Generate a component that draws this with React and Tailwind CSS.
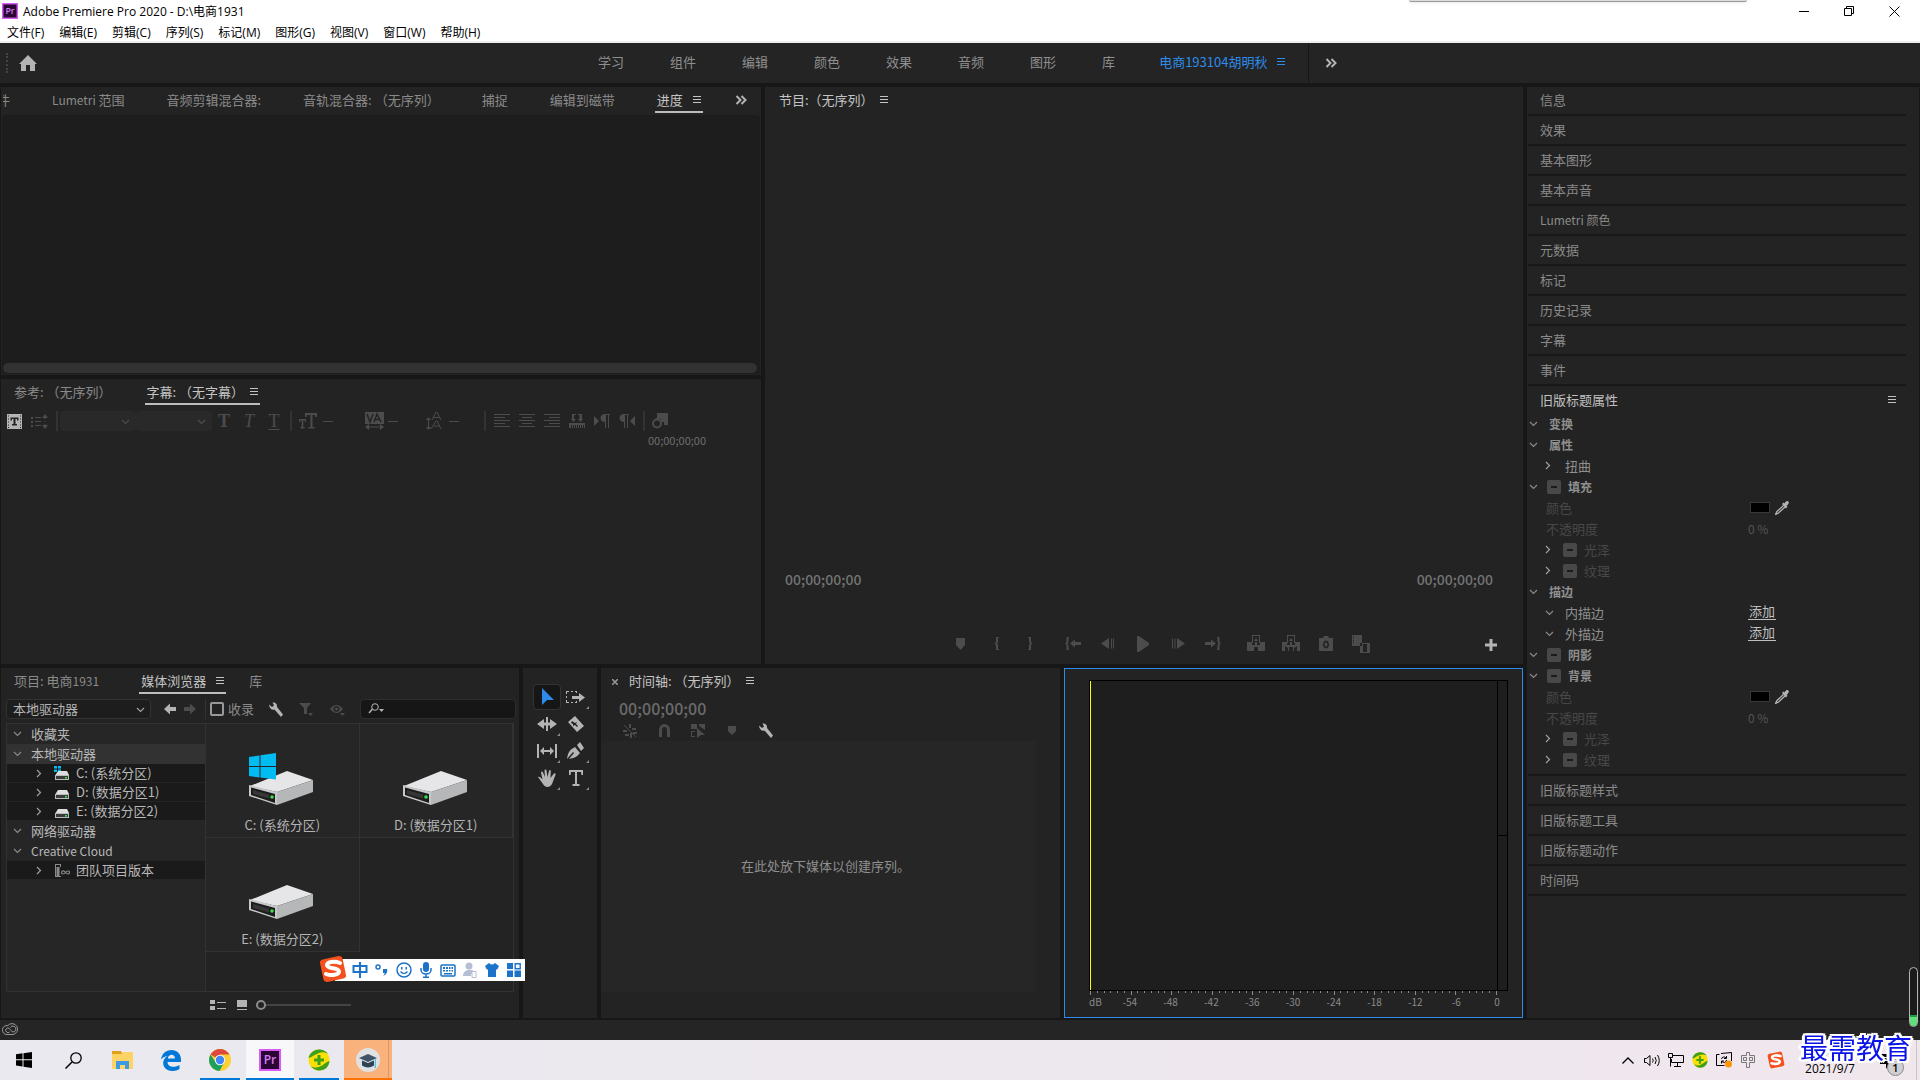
import { useState } from 'react';

const WORKSPACES = ['学习', '组件', '编辑', '颜色', '效果', '音频', '图形', '库'];
const MENUS = ['文件(F)', '编辑(E)', '剪辑(C)', '序列(S)', '标记(M)', '图形(G)', '视图(V)', '窗口(W)', '帮助(H)'];
const PANELS_TOP = ['信息', '效果', '基本图形', '基本声音', 'Lumetri 颜色', '元数据', '标记', '历史记录', '字幕', '事件'];
const PANELS_BOTTOM = ['旧版标题样式', '旧版标题工具', '旧版标题动作', '时间码'];

const PROPS = [
  { label: '变换', kind: 'head' },
  { label: '属性', kind: 'head' },
  { label: '扭曲', kind: 'sub' },
  { label: '填充', kind: 'head', check: true },
  { label: '颜色', kind: 'value', swatch: true },
  { label: '不透明度', kind: 'value', value: '0 %' },
  { label: '光泽', kind: 'sub', check: true },
  { label: '纹理', kind: 'sub', check: true },
  { label: '描边', kind: 'head' },
  { label: '内描边', kind: 'sub', open: true, add: true },
  { label: '外描边', kind: 'sub', open: true, add: true },
  { label: '阴影', kind: 'head', check: true },
  { label: '背景', kind: 'head', check: true },
  { label: '颜色', kind: 'value', swatch: true },
  { label: '不透明度', kind: 'value', value: '0 %' },
  { label: '光泽', kind: 'sub', check: true },
  { label: '纹理', kind: 'sub', check: true },
];

function Icon({ w = 16, h = 16, className = '', children }) {
  return (
    <svg width={w} height={h} viewBox={`0 0 ${w} ${h}`} fill="currentColor" className={`shrink-0 ${className}`} aria-hidden="true">
      {children}
    </svg>
  );
}

const Burger = ({ className = '' }) => (
  <Icon w={8} h={8} className={className}>
    <path d="M0 0h8v1H0zM0 3h8v1H0zM0 6h8v1H0z" />
  </Icon>
);

const More = () => (
  <Icon w={12} h={10} className="text-[#b4b4b4]">
    <path d="M1.500 1l4 4-4 4M6.500 1l4 4-4 4" fill="none" stroke="currentColor" strokeWidth="2" />
  </Icon>
);

const Down = ({ className = 'text-[#8a8a8a]' }) => (
  <Icon w={9} h={6} className={className}>
    <path d="M1 1l3.500 3.500L8 1" fill="none" stroke="currentColor" strokeWidth="1.200" />
  </Icon>
);

const Right = ({ className = 'text-[#a0a0a0]' }) => (
  <Icon w={6} h={9} className={className}>
    <path d="M1 1l3.500 3.500L1 8" fill="none" stroke="currentColor" strokeWidth="1.200" />
  </Icon>
);

const Wrench = () => (
  <Icon w={14} h={15} className="text-[#b4b4b4]">
    <path d="M0 2.500L3 5l2-1.500L3.500 0.500C6 0 8.500 1.500 8 5l6 7.500-2 2.500L5.500 7.500C3 8.500 0.300 6.500 0 2.500z" />
  </Icon>
);

const PrLogo = ({ size }) => (
  <svg width={size} height={size} viewBox="0 0 22 22" className="shrink-0" aria-hidden="true">
    <rect x="1" y="1" width="20" height="20" fill="#2a0634" stroke="#d75cf6" strokeWidth="2" />
    <text x="11" y="15" textAnchor="middle" fontSize="12" fontFamily="Open Sans" fontWeight="600" fill="#d77bf0">Pr</text>
  </svg>
);

const SogouLogo = ({ size }) => (
  <svg width={size} height={size} viewBox="0 0 28 28" className="shrink-0" aria-hidden="true">
    <rect x="2.500" y="2.500" width="23" height="23" rx="3.500" fill="#f4511e" transform="rotate(-12 14 14)" />
    <path d="M21 8c-5-2-13-1.500-13 2 0 4.500 12 2 12 6.500 0 3.500-8 4.500-13 2.500" fill="none" stroke="#fff" strokeWidth="4" strokeLinecap="round" />
  </svg>
);

const Guard360 = ({ size }) => (
  <svg width={size} height={size} viewBox="0 0 22 22" className="shrink-0" aria-hidden="true">
    <circle cx="11" cy="11" r="10.500" fill="#fde003" />
    <path d="M0.500 9C2 3 7 0 12 0.500c4 0.300 6.500 2 8 4.500-3-2-6-2-9-1C7 5.200 4.500 8 0.500 9z" fill="#3fa01c" />
    <path d="M21.500 12c-0.500 6-5 10-11 9.500-3.500-0.300-6-2-7.500-4.500 3 2 6 2 9 0.500 3.500-1.500 6-4.500 9.500-5.500z" fill="#3fa01c" />
    <path d="M9.500 6h3v3.500H16v3h-3.500V16h-3v-3.500H6v-3h3.500z" fill="#3fa01c" />
  </svg>
);

function Drive({ windows }) {
  return (
    <svg width="66" height="54" viewBox="0 0 66 54" aria-hidden="true">
      <path d="M1 33L38 18l26 9-36 12z" fill="#e6e6e8" />
      <path d="M28 39l36-12v12L28 52z" fill="#b6b7b8" />
      <path d="M0 32l28 7v13L0 43z" fill="#c8c9ca" />
      <path d="M2 34.500l24 6.500v9L2 42z" fill="#1c1c1c" />
      <path d="M4 37l16 4.500v4L4 41z" fill="#363636" />
      <circle cx="23" cy="44" r="1.800" fill="#35e24a" />
      {windows && <path d="M0 4l10.500-1.500V13H0zM11.500 2.300L27 0v13H11.500zM0 14h10.500v10.500L0 23zM11.500 14H27v12.500l-15.500-2z" fill="#00bcf2" />}
    </svg>
  );
}

function SmallDrive({ windows }) {
  return (
    <Icon w={16} h={14}>
      {windows && <path d="M0 0h3v2.500H0zM4 0h3v2.500H4zM0 3.500h3V6H0zM4 3.500h3V6H4z" fill="#00bcf2" />}
      <path d="M4 5h9l2 4H1.500z" fill="#dededf" />
      <path d="M1 9h14v5H1z" fill="#b9babb" />
      <path d="M2 10h12v3H2z" fill="#3a3a3a" />
      <path d="M11 11h2v1.500h-2z" fill="#35e24a" />
    </Icon>
  );
}

// `tight` is for titles that end in a full-width bracket, which brings its own blank
function Tab({ children, active, single, tight }) {
  return (
    <button className={`flex h-[26px] shrink-0 items-center whitespace-nowrap border-b-2 pt-0.5 ${tight ? 'gap-1.5' : 'gap-2.5'} ${active ? 'text-[#c4c4c4]' : 'text-[#8a8a8a]'} ${active && !single ? '-mx-0.5 border-[#bdbdbd] px-0.5' : 'border-transparent'}`}>
      <span className="whitespace-pre">{children}</span>
      {active && <Burger />}
    </button>
  );
}

function TitleBar() {
  return (
    <header className="relative h-[43px] shrink-0 border-b-2 border-[#eeefee] bg-white font-['Open_Sans','Noto_Sans_CJK_SC',sans-serif] text-xs text-black">
      <div className="flex h-[22px] items-center pl-0.5 pr-[3px]">
        <PrLogo size={16} />
        <h1 className="ml-[5px] pt-px">Adobe Premiere Pro 2020 - D:\电商1931</h1>
        <div className="ml-auto flex h-full">
          <button aria-label="最小化" className="grid w-[45px] place-items-center">
            <Icon w={11} h={11}><path d="M0 5h10v1H0z" /></Icon>
          </button>
          <button aria-label="还原" className="grid w-[45px] place-items-center">
            <Icon w={11} h={11}><path d="M0.500 2.500h7v7h-7zM2.500 2.500v-2h7v7h-2" fill="none" stroke="currentColor" /></Icon>
          </button>
          <button aria-label="关闭" className="grid w-[45px] place-items-center">
            <Icon w={11} h={11}><path d="M0.500 0.500l10 10M10.500 0.500l-10 10" fill="none" stroke="currentColor" /></Icon>
          </button>
        </div>
      </div>
      <nav className="flex h-[19px] items-center gap-[15px] pl-[7px] pt-0.5">
        {MENUS.map(m => <button key={m} className="whitespace-nowrap">{m}</button>)}
      </nav>
      <div className="absolute right-[173px] top-0 h-0.5 w-[338px] rounded-b-md border-b border-[#9a9a9a] bg-[#dcdcdc] shadow" />
    </header>
  );
}

function WorkspaceBar() {
  return (
    <div className="flex h-10 shrink-0 items-center bg-[#242424] text-[#8f8f8f]">
      <div className="flex w-[598px] items-center">
        <span className="ml-1.5 h-5 border-l-2 border-dotted border-[#444]" />
        <button aria-label="主页" className="ml-[11px]">
          <Icon w={18} h={16} className="text-[#b4b4b4]"><path d="M9 0l9 9h-2v7h-5v-6H7v6H2V9H0z" /></Icon>
        </button>
      </div>
      <nav className="mb-0.5 flex items-center gap-[46px]">
        {WORKSPACES.map(w => <button key={w}>{w}</button>)}
        <button className="-ml-0.5 flex items-center gap-2.5 whitespace-nowrap text-[#2d8ceb]">电商193104胡明秋<Burger /></button>
      </nav>
      <div className="ml-[23px] flex h-full items-center border-l border-[#161616] pl-4">
        <button aria-label="更多工作区"><More /></button>
      </div>
    </div>
  );
}

function ProgressPanel() {
  return (
    <section className="flex min-h-0 flex-[288_1_0] flex-col bg-[#232323]">
      <div className="flex h-7 shrink-0 gap-[42px] overflow-hidden pl-0.5">
        <div className="flex w-[7px] shrink-0 justify-end overflow-hidden"><Tab>件</Tab></div>
        <Tab><span className="text-xs">Lumetri </span>范围</Tab>
        <Tab>音频剪辑混合器:</Tab>
        <Tab>音轨混合器: （无序列）</Tab>
        <Tab>捕捉</Tab>
        <Tab>编辑到磁带</Tab>
        <Tab active>进度</Tab>
        <button aria-label="更多面板" className="-ml-2 h-[26px] w-3 shrink-0"><More /></button>
      </div>
      <div className="mx-px mb-px flex flex-1 flex-col justify-end rounded-sm bg-[#1d1d1d] p-px pr-[3px]">
        <div className="h-2.5 rounded-full bg-[#323232]" />
      </div>
    </section>
  );
}

const Divider = () => <span className="h-5 w-0.5 shrink-0 bg-[#333]" />;
const Dash = () => <span className="h-px w-2.5 shrink-0 bg-[#4c4c4c]" />;

const FontSelect = ({ label }) => (
  <div className="relative w-[76px] shrink-0">
    <select aria-label={label} className="h-5 w-full appearance-none rounded-sm bg-[#292929]"><option></option></select>
    <Down className="pointer-events-none absolute right-1.5 top-2 text-[#4c4c4c]" />
  </div>
);

const Align = ({ d, label }) => (
  <button aria-label={label}><Icon w={16} h={14}><path d={d} /></Icon></button>
);

function CaptionPanel() {
  return (
    <section className="flex min-h-0 flex-[285_1_0] flex-col bg-[#232323]">
      <div className="flex h-7 shrink-0 gap-[35px] pl-[13px]">
        <Tab>参考: （无序列）</Tab>
        <Tab active tight>字幕: （无字幕）</Tab>
      </div>
      <div className="mt-1 flex h-5 shrink-0 items-center pl-1.5 text-[#4c4c4c]">
        <button aria-label="添加字幕" className="text-[#b4b4b4]">
          <Icon w={15} h={15}>
            <path d="M0 0h15v15H0z" />
            <path d="M1 1.500h1v1H1zM1 4.500h1v1H1zM1 7.500h1v1H1zM1 10.500h1v1H1zM1 13h1v1H1zM13 1.500h1v1h-1zM13 4.500h1v1h-1zM13 7.500h1v1h-1zM13 10.500h1v1h-1zM13 13h1v1h-1zM3.500 3.500h8v3h-1.500V5H8.500v5H10v1.500H5V10h1.500V5H5v1.500H3.500z" fill="#232323" />
          </Icon>
        </button>
        <button aria-label="行距" className="ml-[9px] mr-2">
          <Icon w={17} h={15}><path d="M0 3h2v2H0zM4 3h6v1H4zM0 7h2v2H0zM4 7h6v1H4zM0 11h2v2H0zM4 11h6v1H4zM14 0l3 4h-2.500v1h-1V4H11zM13.500 7h1v1h-1zM13.500 10h1v1H17l-3 4-3-4h2.500z" /></Icon>
        </button>
        <Divider />
        <div className="ml-0.5 flex"><FontSelect label="字体" /><FontSelect label="字体样式" /></div>
        <div className="ml-1.5 mr-2.5 flex items-center gap-[13px] font-['Liberation_Serif',serif] text-lg leading-5">
          <button className="w-3 font-bold">T</button>
          <button className="w-3 italic">T</button>
          <button className="w-3 underline underline-offset-2">T</button>
        </div>
        <Divider />
        <div className="ml-[7px] flex w-[66px] items-center gap-1.5">
          <Icon w={18} h={16}><path d="M6 0h12v4h-1.500L16 2h-2.500v12h2v1.500h-6V14h2V2H8l-.5 2H6zM0 6h7v3H6V7.500H4.300v6.500H5.500v1.500h-4V14h1.200V7.500H1V9H0z" /></Icon>
          <Dash />
        </div>
        <div className="flex w-[61px] items-center gap-1">
          <Icon w={19} h={18}>
            <path d="M0 0h19v12H0z" />
            <path d="M2 2l3 8 3-8M9 10l3-8 4 8M10.500 7.500h4" fill="none" stroke="#232323" strokeWidth="1.500" />
            <path d="M0 15l4-3v2.500h11V12l4 3-4 3v-2.500H4V18z" />
          </Icon>
          <Dash />
        </div>
        <div className="flex w-[58px] items-center gap-1.5">
          <Icon w={17} h={18}><path d="M6 8l4-8h1l4 8M8 5.500h5M5 17l5-8h1l4 8M8 14h6M2.500 7v9" fill="none" stroke="currentColor" /><path d="M2.500 5L5 8H0zM2.500 18L0 15h5z" /></Icon>
          <Dash />
        </div>
        <Divider />
        <div className="ml-2 mr-2 flex items-center gap-[9px]">
          <Align label="左对齐" d="M0 0h16v1H0zM0 3h11v1H0zM0 6h16v1H0zM0 9h11v1H0zM0 12h16v1H0z" />
          <Align label="居中" d="M0 0h16v1H0zM3 3h10v1H3zM0 6h16v1H0zM3 9h10v1H3zM0 12h16v1H0z" />
          <Align label="右对齐" d="M0 0h16v1H0zM5 3h11v1H5zM0 6h16v1H0zM5 9h11v1H5zM0 12h16v1H0z" />
          <Align label="制表位" d="M3 0h4v1H5v4h2L4.500 8 2 5h1zM9 0h4v5h1L11.500 8 9 5h1.500V1H9zM0 9h16v5h-1v-3h-1v3h-1v-3h-1v3h-1v-3h-1v3H9v-3H8v3H7v-3H6v3H5v-3H4v3H3v-3H2v3H0z" />
          <Align label="从左到右" d="M0 2l5 5-5 5zM16 0v1h-1v13h-1V1h-2v13h-1V8C5 8 5 0 11 0z" />
          <Align label="从右到左" d="M16 2l-5 5 5 5zM10 0v1H9v13H8V1H6v13H5V8C-1 8-1 0 5 0z" />
        </div>
        <Divider />
        <button aria-label="导出设置" className="ml-1.5">
          <Icon w={17} h={16}><path d="M6 0h11v12h-4V9h-3V6H6z" /><circle cx="6" cy="10.500" r="4" fill="none" stroke="currentColor" strokeWidth="2" /><path d="M10 3l-6 3 5 1z" /></Icon>
        </button>
      </div>
      <time className="ml-[647px] mt-px text-[11px] leading-4 text-[#6e6e6e]">00;00;00;00</time>
    </section>
  );
}

const TRANSPORT = [
  { label: '添加标记', d: 'M5 3h9v7l-4.500 5L5 10z' },
  { label: '标记入点', d: 'M13 2v1h-1v4l-1 1.500 1 1.500v4h1v1h-3v-5L8.500 8.500 10 7V2z' },
  { label: '标记出点', d: 'M7 2v1h1v4l1 1.500L8 10v4H7v1h3v-5l1.500-1.500L10 7V2z' },
  { label: '转到入点', gap: true, d: 'M5 2v1H4.500v4l-1 1.500 1 1.500v4H5v1H2.500v-5L1 8.500 2.500 7V2zM6 8.500l5-4V7h6v3h-6v2.500z' },
  { label: '后退一帧', d: 'M2 8.500L10 3v11zM12 3.500h1v10h-1zM14 3.500h1v10h-1z' },
  { label: '播放', d: 'M3 1h2l10 7v2L5 17H3z' },
  { label: '前进一帧', d: 'M3 3.500h1v10H3zM5.500 3.500h1v10h-1zM8 3l8 5.500L8 14z' },
  { label: '转到出点', d: 'M13 2v1h.5v4l1 1.500-1 1.500v4H13v1h2.500v-5L17 8.500 15.500 7V2zM12 8.500l-5-4V7H1v3h6v2.500z' },
  { label: '提升', gap: true, d: 'M0 7h5v3h3V7h2v3h3V7h5v9h-7v-4H7v4H0zM5 0h8v8h-1V1H6v7H5zM9 3l2 3H7z' },
  { label: '提取', d: 'M0 7h5v3h3V7h2v3h3V7h5v9h-3v-5l-3 2v3h-1v-4H7v4H6v-3l-3-2v5H0zM5 0h8v8h-1V1H6v7H5zM9 3l2 3H7z' },
  { label: '导出帧', d: 'M2 3h4l1-2h4l1 2h4v13H2zM9 5.500a3 4 0 1 0 .01 0zM9 7.500a1.500 2 0 1 1-.01 0z' },
  { label: '比较视图', d: 'M0 0h10v11H0zM8 8h10v10H8zM11 9v8h4V9zM1 1v1h1V1zM1 3v1h1V3zM1 5v1h1V5zM1 7v1h1V7z' },
];

function ProgramPanel() {
  return (
    <section className="flex min-h-0 flex-col bg-[#232323]">
      <div className="h-7 pl-3.5"><Tab active single tight>节目:（无序列）</Tab></div>
      <div className="flex-1" />
      <div className="flex justify-between px-5 pr-[30px] text-sm font-medium leading-5 text-[#747474]">
        <time>00;00;00;00</time>
        <time>00;00;00;00</time>
      </div>
      <div className="mb-2 mt-[43px] flex h-6 items-center text-[#4c4c4c]">
        <div className="ml-[177px] flex">
          {TRANSPORT.map(t => (
            <button key={t.label} aria-label={t.label} className={`grid w-[35px] place-items-center ${t.gap ? 'ml-2' : ''}`}>
              <Icon w={18} h={18}><path fillRule="evenodd" d={t.d} /></Icon>
            </button>
          ))}
        </div>
        <button aria-label="按钮编辑器" className="ml-auto mr-[26px] mt-0.5 text-[#b4b4b4]">
          <Icon w={12} h={12}><path d="M4.500 0h3v4.500H12v3H7.500V12h-3V7.500H0v-3h4.500z" /></Icon>
        </button>
      </div>
    </section>
  );
}

function TreeRow({ label, open, nested, selected, icon }) {
  return (
    <li className={`flex items-center ${nested ? 'mb-px h-[18px] bg-[#1a1a1a] pl-[27px]' : 'h-5 pl-[5px]'} ${selected ? 'bg-[#323232]' : ''}`}>
      <span className="grid w-2.5 place-items-center">{open ? <Down /> : <Right />}</span>
      {icon && <span className="ml-2 grid w-5 place-items-center">{icon}</span>}
      <span className={icon ? 'ml-1' : 'ml-[9px]'}>{label}</span>
    </li>
  );
}

function DriveCell({ label, windows }) {
  return (
    <figure className="flex h-[114px] flex-col items-center border-b border-r border-[#323232] bg-[#262626] pt-[29px]">
      <Drive windows={windows} />
      <figcaption className="mt-2 leading-5">{label}</figcaption>
    </figure>
  );
}

function MediaBrowser() {
  const [zoom, setZoom] = useState(0);
  return (
    <section className="flex min-h-0 flex-col bg-[#232323] text-[#b4b4b4]">
      <div className="flex h-7 shrink-0 pl-[13px]">
        <Tab>项目: 电商<span className="text-xs">1931</span></Tab>
        <div className="ml-[42px] mr-[25px] flex"><Tab active>媒体浏览器</Tab></div>
        <Tab>库</Tab>
      </div>
      <div className="mt-[3px] flex h-5 shrink-0 items-center pl-[5px] pr-[3px]">
        <div className="relative w-[145px] shrink-0">
          <select aria-label="驱动器" className="h-5 w-full appearance-none rounded-sm border border-[#333] bg-[#1d1d1d] pl-1.5 leading-4">
            <option>本地驱动器</option>
          </select>
          <Down className="pointer-events-none absolute right-1.5 top-2 text-[#a0a0a0]" />
        </div>
        <button aria-label="后退" className="ml-[13px]"><Icon w={12} h={12}><path d="M0 6l6-5.500v3.500h6v4H6v3.500z" /></Icon></button>
        <button aria-label="前进" className="ml-2 mr-[9px] text-[#4c4c4c]"><Icon w={12} h={12}><path d="M12 6L6 .5V4H0v4h6v3.500z" /></Icon></button>
        <label className="flex h-5 items-center gap-1 border-l border-[#333] pl-1 text-[#8a8a8a]">
          <input type="checkbox" className="size-3.5 appearance-none rounded-xs border-2 border-[#999]" />收录
        </label>
        <button aria-label="设置" className="ml-[15px]"><Wrench /></button>
        <button aria-label="筛选" className="ml-4 text-[#4c4c4c]"><Icon w={14} h={14}><path d="M0 1h12L8 6v6H5V6zM9 11h5l-2.500 3z" /></Icon></button>
        <button aria-label="查看方式" className="ml-[17px] mr-3.5 text-[#4c4c4c]">
          <Icon w={16} h={14}><path fillRule="evenodd" d="M0 7q6.500-8 13 0-6.500 8-13 0zM6.500 4a3 3 0 1 0 .01 0z" /><circle cx="6.500" cy="7" r="1.500" /><path d="M10 11h5l-2.500 3z" /></Icon>
        </button>
        <div className="relative min-w-0 flex-1">
          <Icon w={16} h={12} className="absolute left-2 top-1"><circle cx="7" cy="4" r="3.300" fill="none" stroke="currentColor" /><path d="M4.500 6L1 10" stroke="currentColor" strokeWidth="1.500" /><path d="M11 6h5l-2.500 3z" /></Icon>
          <input type="search" aria-label="搜索" className="block h-5 w-full rounded-sm border border-[#2d2d2d] bg-[#161616] pl-7" />
        </div>
      </div>
      <div className="ml-[5px] mr-[5px] mt-1 flex min-h-0 flex-1 border border-[#323232]">
        <ul className="w-[198px] shrink-0 bg-[#262626] text-[#b8b8b8]">
          <TreeRow open label="收藏夹" />
          <TreeRow open selected label="本地驱动器" />
          <TreeRow nested label="C: (系统分区)" icon={<SmallDrive windows />} />
          <TreeRow nested label="D: (数据分区1)" icon={<SmallDrive />} />
          <TreeRow nested label="E: (数据分区2)" icon={<SmallDrive />} />
          <TreeRow open label="网络驱动器" />
          <TreeRow open label={<span className="text-xs">Creative Cloud</span>} />
          <TreeRow nested label="团队项目版本" icon={
            <Icon w={16} h={13} className="text-[#8a8a8a]"><path d="M1 0h6v3H6V1H2v11h5v1H1zM2.500 3h3v9h-3z" /><path d="M11.500 8.500c-1.500-2.500-4-2-4 0s2.500 2 4 0 4-2 4 0-2.500 2-4 0z" fill="none" stroke="currentColor" strokeWidth="1.200" /></Icon>
          } />
        </ul>
        <div className="grid flex-1 grid-cols-2 content-start border-l border-[#323232]">
          <DriveCell windows label="C: (系统分区)" />
          <DriveCell label="D: (数据分区1)" />
          <DriveCell label="E: (数据分区2)" />
        </div>
      </div>
      <div className="flex h-[26px] shrink-0 items-center pb-px pl-[209px]">
        <button aria-label="列表视图"><Icon w={16} h={10}><path d="M0 0h5v4H0zM0 6h5v4H0zM7 2h9v1H7zM7 8h9v1H7z" /></Icon></button>
        <button aria-label="缩览图视图" className="ml-[11px]"><Icon w={10} h={10}><path d="M0 0h10v7H0zM0 9h10v1H0z" /></Icon></button>
        <input type="range" aria-label="缩览图大小" value={zoom} onChange={e => setZoom(e.target.value)}
          className="ml-[9px] h-2.5 w-[95px] appearance-none bg-transparent [&::-webkit-slider-runnable-track]:h-0.5 [&::-webkit-slider-runnable-track]:bg-[#444] [&::-webkit-slider-thumb]:-mt-1 [&::-webkit-slider-thumb]:size-2.5 [&::-webkit-slider-thumb]:appearance-none [&::-webkit-slider-thumb]:rounded-full [&::-webkit-slider-thumb]:border-2 [&::-webkit-slider-thumb]:border-[#8a8a8a] [&::-webkit-slider-thumb]:bg-[#232323]" />
      </div>
    </section>
  );
}

const TOOLS = [
  { label: '选择工具', d: 'M5 1l12 12h-7l-5 5z' },
  { label: '向前选择轨道工具', corner: true, d: 'M0 4h3v1H1v2H0zM5 4h2v1H5zM9 4h2v2h-1V5H9zM0 9h1v2H0zM0 13h1v2h2v1H0zM5 15h2v1H5zM9 15h1v-1h1v2H9zM6 9h7V6l6 4.500-6 4.500v-3H6z' },
  { label: '波纹编辑工具', corner: true, d: 'M0 10l7-5v3.500h2V3h2v5.500h2V5l7 5-7 5v-3.500h-2V17H9v-5.500H7V15z' },
  { label: '剃刀工具', d: 'M2 8l7-6 9 10-7 6zM6 7l-1 2 2 1v2l2-1 2 2 1-1-2-2 1-2-2 1z' },
  { label: '外滑工具', corner: true, d: 'M0 3h2v14H0zM18 3h2v14h-2zM3 10l4-4v3h6V6l4 4-4 4v-3H7v3z' },
  { label: '钢笔工具', corner: true, d: 'M1 18C2 12 3 9 9 6l5 6c-3 4-6 5-11 6l5-6-1-1zM11 4l3-3 4 6-3 3z' },
  { label: '手形工具', corner: true, d: 'M1 9c1.500-1 3 1 4.500 2.500L4 4.500c0-1.500 1.500-1.500 2 0L8 9 7.500 2.500c0-1.500 2-1.500 2 0L10.500 9 12 3c.5-1.500 2-1 1.800.5L13.500 10l3-4c1-1.500 2.500-.5 2 .8L15 16c-2 4-7 4-9 0z' },
  { label: '文字工具', corner: true, d: 'M3 2h14v5h-1.500L15 4h-4v12h2.500v2h-7v-2H9V4H5l-.5 3H3z' },
];

function ToolsPanel() {
  return (
    <section aria-label="工具" className="bg-[#232323] pl-[9px] pr-1.5 pt-4 text-[#b4b4b4]">
      <div className="grid grid-cols-2 justify-items-center gap-y-px">
        {TOOLS.map((t, i) => (
          <button key={t.label} aria-label={t.label} className={`relative grid h-[26px] w-7 place-items-center rounded-sm border ${i === 0 ? 'border-[#333] bg-[#161616] text-[#2d8ceb]' : 'border-transparent'}`}>
            <Icon w={20} h={20}><path fillRule="evenodd" d={t.d} /></Icon>
            {t.corner && <Icon w={3} h={3} className="absolute bottom-0 right-0 text-[#8a8a8a]"><path d="M3 0v3H0z" /></Icon>}
          </button>
        ))}
      </div>
    </section>
  );
}

function TimelinePanel() {
  return (
    <section className="flex min-h-0 flex-col bg-[#232323]">
      <div className="flex h-[26px] shrink-0 items-center pl-[11px]">
        <button aria-label="关闭时间轴" className="mr-[11px] mt-0.5"><Icon w={6} h={6} className="text-[#999]"><path d="M0 0l6 6M6 0L0 6" stroke="currentColor" strokeWidth="1.500" /></Icon></button>
        <Tab active single tight>时间轴: （无序列）</Tab>
      </div>
      <time className="mt-0.5 pl-[18px] text-base font-medium leading-6 text-[#6c6c6c]">00;00;00;00</time>
      <div className="flex h-[21px] shrink-0 items-center pl-[22px] text-[#4c4c4c]">
        <button aria-label="嵌套序列" className="w-[35px]"><Icon w={14} h={14}><path d="M1 1l12 12" stroke="currentColor" /><path d="M6 0h2v4H6zM9 4h4v2H9zM0 6h4v2H0zM10 8h4v2h-4zM2 10h4v2H2zM7 9h2v5H7z" /></Icon></button>
        <button aria-label="对齐" className="w-[33px]"><Icon w={13} h={13}><path d="M2.500 13V6a4 4.500 0 0 1 8 0v7" fill="none" stroke="currentColor" strokeWidth="3" /></Icon></button>
        <button aria-label="链接选择项" className="w-[37px]"><Icon w={14} h={14}><path d="M0 0h6v5H0zM8 0h6v6L8 2zM0 7h4v1H1v4h3v1H0zM6 4l8 7h-4l-4 3z" /></Icon></button>
        <button aria-label="添加标记" className="w-[31px]"><Icon w={8} h={9}><path d="M0 0h8v5L4 9 0 5z" /></Icon></button>
        <button aria-label="时间轴显示设置"><Wrench /></button>
      </div>
      <div className="mb-[26px] mr-6 flex flex-1 items-center justify-center bg-[#262626] pb-0.5 pl-3.5 text-[#8f8f8f]">
        在此处放下媒体以创建序列。
      </div>
    </section>
  );
}

function AudioMeter() {
  const labels = ['dB', '-54', '-48', '-42', '-36', '-30', '-24', '-18', '-12', '-6', '0'];
  return (
    <section aria-label="音频仪表" className="flex min-h-0 flex-col border border-[#2d8ceb] bg-[#232323] pb-2 pl-6 pr-3.5 pt-[11px]">
      <div className="flex min-h-0 flex-1 border border-black bg-[#1e1e1e]">
        <div className="flex-1 border-l border-[#ffff00]" />
        <div className="flex w-2.5 flex-col border-l border-black">
          <div className="flex-1 border-b border-black" />
          <div className="flex-1" />
        </div>
      </div>
      <div className="ml-px mr-[11px] flex justify-between text-[#8a8a8a]">
        {Array.from({ length: 61 }, (_, i) => (
          <span key={i} className={`w-px bg-current ${i % 6 === 0 ? 'h-1' : 'h-0.5'}`} />
        ))}
      </div>
      <div className="mr-[11px] flex justify-between text-[10px] leading-3.5 text-[#8a8a8a]">
        {labels.map((l, i) => (
          <span key={l} className={`flex w-0 whitespace-nowrap ${i === 0 ? '' : 'justify-center'}`}>{l}</span>
        ))}
      </div>
    </section>
  );
}

const MinusBox = ({ label }) => (
  <input type="checkbox" aria-label={label}
    className="grid size-3.5 shrink-0 appearance-none place-items-center rounded-xs bg-[#484848] before:h-0.5 before:w-1.5 before:bg-[#1b1b1b]" />
);

function PropRow({ row }) {
  const { label, kind, check, open, swatch, value, add } = row;
  const indent = kind === 'head' ? 'pl-px' : kind === 'sub' ? 'pl-[17px]' : 'pl-[18px]';
  const tone = kind === 'value' || (kind === 'sub' && check) ? 'text-[#484848]' : 'text-[#8f8f8f]';
  return (
    <li className="flex h-[21px] items-center">
      <div className={`flex w-[220px] shrink-0 items-center ${indent}`}>
        {kind !== 'value' && (
          <span className="flex w-[18px] items-center">{kind === 'head' || open ? <Down /> : <Right />}</span>
        )}
        {check && <MinusBox label={label} />}
        <span className={`${tone} ${kind === 'head' ? 'text-xs font-bold' : ''} ${check ? 'ml-[7px]' : kind === 'value' ? '' : 'ml-0.5'}`}>{label}</span>
      </div>
      {swatch && (
        <>
          <button aria-label="颜色" className="ml-0.5 h-[11px] w-5 border border-[#383838] bg-black" />
          <button aria-label="吸管" className="ml-[5px] text-[#b4b4b4]">
            <Icon w={14} h={14}><path d="M7 3l1.500-1.500 1 1c1-2 2-2.500 3.200-2.500 1.800.8 1.500 2.800-1.200 4.800l1 1L11 7.500z" /><path d="M8.500 4.500L2 10.500l-1.500 3 3-1.500L10 6" fill="none" stroke="currentColor" strokeWidth="1.300" /></Icon>
          </button>
        </>
      )}
      {value && <span className="text-xs text-[#555]">{value}</span>}
      {add && <button className="mb-1 border-b border-[#c0c0c0] px-px leading-[17px] text-[#c0c0c0]">添加</button>}
    </li>
  );
}

const PanelHeader = ({ children }) => (
  <button className={`flex h-[30px] items-center border-b-2 border-[#181818] pl-3 text-left text-[#8a8a8a] ${children.startsWith('Lumetri') ? 'text-xs' : ''}`}>{children}</button>
);

function RightDock() {
  return (
    <aside className="flex w-[392px] shrink-0 flex-col bg-[#232323] pl-px pr-[13px]">
      <div className="-mt-px flex flex-col">{PANELS_TOP.map(p => <PanelHeader key={p}>{p}</PanelHeader>)}</div>
      <div className="flex h-[27px] shrink-0 items-center justify-between pl-3 pr-2.5 text-[#c0c0c0]">
        <h2>旧版标题属性</h2>
        <button aria-label="面板菜单"><Burger /></button>
      </div>
      <ul className="pb-1">{PROPS.map((row, i) => <PropRow key={i} row={row} />)}</ul>
      <div className="flex flex-col border-t-2 border-[#181818]">{PANELS_BOTTOM.map(p => <PanelHeader key={p}>{p}</PanelHeader>)}</div>
    </aside>
  );
}

const ImeButton = ({ label, children }) => (
  <button aria-label={label} className="grid w-[22px] place-items-center">{children}</button>
);

function ImeBar() {
  return (
    <div className="fixed bottom-[99px] left-[319px] flex items-center">
      <div className="absolute -top-1 left-0 z-10"><SogouLogo size={28} /></div>
      <div className="ml-4 flex h-[22px] w-[190px] items-center bg-white pl-3.5 text-[#1c74c8]">
        <ImeButton label="中文">
          <Icon w={16} h={16}><path d="M1.500 4h13v6h-13zM8 0v16" fill="none" stroke="currentColor" strokeWidth="2" /></Icon>
        </ImeButton>
        <ImeButton label="标点"><Icon w={14} h={12}><circle cx="3" cy="3" r="2" fill="none" stroke="currentColor" strokeWidth="1.500" /><path d="M8 5h4c1 3-1 6-4 7 1-1 2-2 1.500-3H8z" /></Icon></ImeButton>
        <ImeButton label="表情"><Icon w={16} h={16}><circle cx="8" cy="8" r="7" fill="none" stroke="currentColor" strokeWidth="1.500" /><path d="M5 5h1.500v2.500H5zM9.500 5H11v2.500H9.500z" /><path d="M4.500 9.500q3.500 4 7 0" fill="none" stroke="currentColor" strokeWidth="1.200" /></Icon></ImeButton>
        <ImeButton label="语音"><Icon w={12} h={16}><rect x="3" width="6" height="10" rx="3" /><path d="M1 6v2a5 4 0 0 0 10 0V6M6 12v3M3 15.200h6" fill="none" stroke="currentColor" strokeWidth="1.500" /></Icon></ImeButton>
        <ImeButton label="键盘"><Icon w={16} h={13}><rect x="1" y="1" width="14" height="11" rx="1" fill="none" stroke="currentColor" strokeWidth="1.500" /><path d="M3 3h2v2H3zM6 3h2v2H6zM9 3h1.500v2H9zM11.500 3H13v2h-1.500zM3 6h2v1.500H3zM6 6h2v1.500H6zM9 6h1.500v1.500H9zM11.500 6H13v1.500h-1.500zM4 9h8v1.500H4z" /></Icon></ImeButton>
        <ImeButton label="用户"><Icon w={14} h={16} className="text-[#b4bfd4]"><circle cx="6" cy="4" r="3.500" /><path d="M0 14c0-8 12-8 12-2H8v2z" /><path d="M9 9.500h4v6H9z" fill="#fff" stroke="currentColor" /></Icon></ImeButton>
        <ImeButton label="皮肤"><Icon w={14} h={14}><path d="M4 0q3 3 6 0l4 3-2 4-1-1v8H3V6L2 7 0 3z" /></Icon></ImeButton>
        <ImeButton label="工具箱"><Icon w={14} h={14}><path d="M0 0h6v6H0zM0 7.500h6V14H0zM7.500 7.500H14V14H7.500z" /><path d="M8.200.7h5v5h-5z" fill="none" stroke="currentColor" strokeWidth="1.400" /></Icon></ImeButton>
      </div>
    </div>
  );
}

function TaskButton({ label, className = '', line, children }) {
  return (
    <button aria-label={label} className={`relative grid h-10 w-12 place-items-center ${className}`}>
      {children}
      {line && <span className={`absolute bottom-0 h-0.5 ${line}`} />}
    </button>
  );
}

function Taskbar() {
  return (
    <footer className="flex h-10 shrink-0 bg-linear-to-r from-[#e9e9ef] to-[#f0e7ed] font-['Open_Sans','Noto_Sans_CJK_SC',sans-serif] text-xs text-black">
      <nav className="flex gap-px">
        <TaskButton label="开始"><Icon w={16} h={16}><path d="M0 2.300l6.500-1v6H0zM7.500 1.200L16 0v7.300H7.500zM0 8.300h6.500v6.200L0 13.600zM7.500 8.300H16V16l-8.500-1.200z" /></Icon></TaskButton>
        <TaskButton label="搜索"><Icon w={17} h={17}><circle cx="11" cy="6" r="5.200" fill="none" stroke="currentColor" strokeWidth="1.300" /><path d="M7 10L.5 16.500" stroke="currentColor" strokeWidth="1.500" /></Icon></TaskButton>
        <TaskButton label="文件资源管理器">
          <Icon w={21} h={18}><path d="M0 0h9l1 2h10v4H0z" fill="#e0a11b" /><path d="M0 3h10l1-2h10v17H0z" fill="#fcd364" /><path d="M4 18v-8h13v8h-4v-4H8v4z" fill="#3c9be0" /></Icon>
        </TaskButton>
        <TaskButton label="Edge">
          <Icon w={20} h={21}><path d="M0 9.500C1 3.500 5 0 10.500 0 16 0 20 4 20 9.500V12H6.500c.3 5.500 7.500 6 12 3v4c-4.500 3-11 2.500-14-.5C.5 14.500 2 8.500 6.500 6 3.500 6.500 1.500 7.500 0 9.500zM6.800 8.500H14c0-5-6.500-5-7.200 0z" fill="#0078d7" fillRule="evenodd" /></Icon>
        </TaskButton>
        <TaskButton label="Chrome" line="w-10 bg-[#0078d7]">
          <Icon w={22} h={22}>
            <circle cx="11" cy="11" r="11" fill="#fdd031" />
            <path d="M11 11L1.500 5.500A11 11 0 0 1 20.500 5.500H11z" fill="#de4b3d" />
            <path d="M1.500 5.500A11 11 0 0 0 10.500 22l5-9L11 11l-4.500 2z" fill="#1ea05c" />
            <circle cx="11" cy="11" r="5.200" fill="#f4f4f4" /><circle cx="11" cy="11" r="4.200" fill="#4285f4" />
          </Icon>
        </TaskButton>
        <TaskButton label="Premiere Pro" className="ml-px bg-[#f8f8fa]" line="w-12 bg-[#0078d7]"><PrLogo size={22} /></TaskButton>
        <TaskButton label="360" line="w-10 bg-[#0078d7]"><Guard360 size={22} /></TaskButton>
        <TaskButton label="课堂" className="bg-[#fab27c]" line="left-0 w-12 bg-[#ff7200]">
          <Icon w={24} h={24}><circle cx="12" cy="12" r="12" fill="#dfe1e3" /><path d="M12 6l9 4-9 4-9-4z" fill="#3f5468" /><path d="M6 12.500v5q6 4 12 0v-5L12 15z" fill="#2f4356" /><path d="M19 11h1v9h-1.500z" fill="#4fc3e8" /></Icon>
          <span className="absolute right-[3px] top-0 h-[38px] w-px bg-[#d99766]" />
        </TaskButton>
      </nav>
      <div className="ml-auto flex items-center *:shrink-0">
        <button aria-label="显示隐藏的图标" className="grid w-6 place-items-center"><Icon w={12} h={7}><path d="M.5 6.500L6 1l5.500 5.500" fill="none" stroke="currentColor" strokeWidth="1.300" /></Icon></button>
        <button aria-label="音量" className="grid w-6 place-items-center"><Icon w={17} h={13}><path d="M.5 4.500h2l3.500-3v10l-3.500-3h-2zM8.500 4.500q1.500 2 0 4M11 3q2.500 3.500 0 7M13.500 1q3.500 5.500 0 11" fill="none" stroke="currentColor" /></Icon></button>
        <button aria-label="网络" className="grid w-6 place-items-center"><Icon w={16} h={14}><path d="M5 2.500h10.500v7H3.500V6M.5.500h4v4h-4zM2.500 4.500v9M9.500 9.500v4M6 13.500h7" fill="none" stroke="currentColor" /></Icon></button>
        <button aria-label="360" className="grid w-6 place-items-center"><Guard360 size={16} /></button>
        <button aria-label="更新" className="grid w-6 place-items-center"><Icon w={17} h={16}><path d="M3.500 2.500h-3v11h8M5 1.500L15.500.5V9" fill="none" stroke="currentColor" /><path d="M5.500 7a2.500 2.500 0 0 1 4.500-1M10.500 8a2.500 2.500 0 0 1-4.500 1.500M10.500 4v2.500H8M5.500 11.500V9H8" fill="none" stroke="currentColor" /><circle cx="12.500" cy="12" r="3.500" fill="#ff9500" /></Icon></button>
        <button aria-label="输入法" className="grid w-6 place-items-center">
          <Icon w={14} h={16}><path d="M5.500 3.500v-3h3v3h5v7h-5v5h-3v-5h-5v-7zM2.500 5.500h3v3h-3zM8.500 5.500h3v3h-3z" fill="none" stroke="#777" /></Icon>
        </button>
        <button aria-label="搜狗" className="grid w-8 place-items-center"><SogouLogo size={18} /></button>
        <div className="w-[76px] text-center leading-4">
          <span className="block pr-2 pt-1">7</span>
          <time className="block pb-0.5">2021/9/7</time>
        </div>
        <button aria-label="通知" className="relative grid h-10 w-12 justify-start pl-3 pt-3.5">
          <Icon w={14} h={15}><path d="M0 0h14v10H9l-3 5v-5H0z" /><path d="M2 3h10v1H2zM2 6h10v1H2z" fill="#eee" /></Icon>
          <span className="absolute bottom-1 right-3 grid size-[17px] place-items-center rounded-full border border-[#888] bg-[#d0cfd2] text-[11px] font-semibold leading-3">1</span>
        </button>
        <span className="h-full w-1 border-l border-[#c8c4c8]" />
      </div>
    </footer>
  );
}

export default function App() {
  return (
    <div className="flex h-screen flex-col overflow-hidden bg-[#171717] font-['Noto_Sans_CJK_SC',sans-serif] text-[13px] leading-5">
      <TitleBar />
      <WorkspaceBar />
      <main className="flex min-h-0 flex-1 gap-1 px-px pb-0.5 pt-1">
        <div className="grid min-w-0 flex-1 grid-rows-[minmax(0,577fr)_minmax(0,350fr)] gap-1">
          <div className="grid min-h-0 grid-cols-[minmax(0,760fr)_minmax(0,758fr)] gap-1">
            <div className="flex min-h-0 flex-col gap-1">
              <ProgressPanel />
              <CaptionPanel />
            </div>
            <ProgramPanel />
          </div>
          <div className="grid min-h-0 grid-cols-[518px_74px_minmax(0,1fr)_minmax(0,1fr)] gap-1">
            <MediaBrowser />
            <ToolsPanel />
            <TimelinePanel />
            <AudioMeter />
          </div>
        </div>
        <RightDock />
      </main>
      <div className="flex h-5 shrink-0 items-center bg-[#252525] pb-0.5 pl-0.5 text-[#9a9a9a]">
        <Icon w={17} h={12}>
          <g fill="none" stroke="currentColor">
            <path d="M5 11.500a4.500 4.500 0 1 1 .8-8.900A5.500 5.500 0 1 1 11 11.500z" />
            <path d="M7.500 9A2.300 2.300 0 1 1 7 5.200L10.500 9a3 3 0 1 0-2.200-4.500" />
          </g>
        </Icon>
      </div>
      <Taskbar />
      <ImeBar />
      <div className="fixed bottom-[53px] right-0.5 flex h-[60px] w-[9px] flex-col justify-end overflow-hidden rounded-full border border-[#b4b4b4] bg-[#1b1b1b]">
        <div className="h-[11px] border-t-2 border-[#1b9e46] bg-[#5fe07a]" />
      </div>
      <div className="pointer-events-none fixed bottom-[17px] right-2 text-[28px] leading-8 text-[#0a14e6] [text-shadow:2px_0_#fff,-2px_0_#fff,0_2px_#fff,0_-2px_#fff,2px_2px_#fff,-2px_-2px_#fff,2px_-2px_#fff,-2px_2px_#fff,3px_0_#fff,-3px_0_#fff]">
        最需教育
      </div>
    </div>
  );
}
